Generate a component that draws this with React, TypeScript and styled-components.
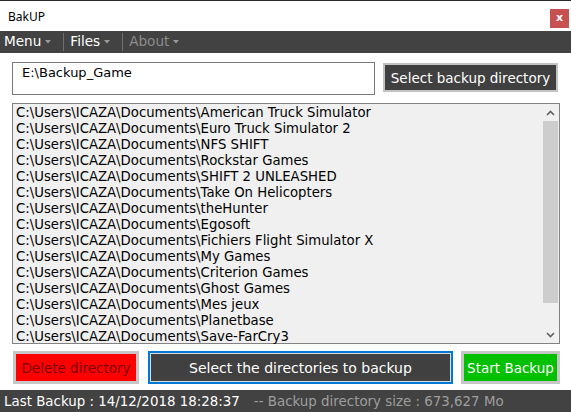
import { FC } from 'react';
import styled, { createGlobalStyle } from 'styled-components';

const directories = [
	'American Truck Simulator',
	'Euro Truck Simulator 2',
	'NFS SHIFT',
	'Rockstar Games',
	'SHIFT 2 UNLEASHED',
	'Take On Helicopters',
	'theHunter',
	'Egosoft',
	'Fichiers Flight Simulator X',
	'My Games',
	'Criterion Games',
	'Ghost Games',
	'Mes jeux',
	'Planetbase',
	'Save-FarCry3',
];

const GlobalStyle = createGlobalStyle`
	html, body {
		margin: 0;
		padding: 0;
		background: #ffffff;
	}
	* {
		box-sizing: border-box;
	}
`;

const Caret: FC = () => (
	<svg width="6" height="4" viewBox="0 0 6 4">
		<path d="M0 0h6L3 3.5z" fill="#9a9a9a" />
	</svg>
);

const App: FC = () => (
	<Window>
		<GlobalStyle />
		<TitleBar>
			<Title>BakUP</Title>
			<CloseButton>x</CloseButton>
		</TitleBar>
		<MenuBar>
			<MenuItem>
				Menu <Caret />
			</MenuItem>
			<MenuItem $separated>
				Files <Caret />
			</MenuItem>
			<MenuItem $separated $disabled>
				About <Caret />
			</MenuItem>
		</MenuBar>
		<Content>
			<TopRow>
				<PathBox>E:\Backup_Game</PathBox>
				<DarkButton>Select backup directory</DarkButton>
			</TopRow>
			<ListBox>
				<Items>
					{directories.map((d) => (
						<Item key={d}>C:\Users\ICAZA\Documents\{d}</Item>
					))}
				</Items>
				<ScrollBar>
					<Arrow>
						<svg width="9" height="6" viewBox="0 0 9 6">
							<path d="M1 5L4.5 1.5L8 5" stroke="#606060" strokeWidth="1.6" fill="none" />
						</svg>
					</Arrow>
					<Track>
						<Thumb />
					</Track>
					<Arrow>
						<svg width="9" height="6" viewBox="0 0 9 6">
							<path d="M1 1L4.5 4.5L8 1" stroke="#606060" strokeWidth="1.6" fill="none" />
						</svg>
					</Arrow>
				</ScrollBar>
			</ListBox>
			<BottomRow>
				<ColorButton $bg="#ff0000" $fg="#7a0000" $width={126}>
					Delete directory
				</ColorButton>
				<MainButton>Select the directories to backup</MainButton>
				<ColorButton $bg="#00c000" $fg="#ffffff" $width={99}>
					Start Backup
				</ColorButton>
			</BottomRow>
		</Content>
		<StatusBar>
			<span>Last Backup : 14/12/2018 18:28:37</span>
			<StatusInfo>-- Backup directory size : 673,627 Mo</StatusInfo>
		</StatusBar>
	</Window>
);

const Window = styled.div`
	width: 571px;
	height: 412px;
	display: flex;
	flex-direction: column;
	background: #ffffff;
	font-family: 'DejaVu Sans', Verdana, sans-serif;
	overflow: hidden;
`;

const TitleBar = styled.div`
	height: 31px;
	flex-shrink: 0;
	display: flex;
	align-items: center;
	justify-content: space-between;
	padding: 0 2px 0 8px;
	border-top: 1px solid #2a2a2a;
`;

const Title = styled.span`
	font-family: 'Noto Sans', 'Open Sans', sans-serif;
	font-size: 12px;
	color: #000000;
`;

const CloseButton = styled.div`
	width: 19px;
	height: 19px;
	margin-top: 4px;
	background: #c75050;
	color: #ffffff;
	font-size: 11px;
	font-weight: bold;
	display: flex;
	align-items: center;
	justify-content: center;
	line-height: 1;
	padding-bottom: 2px;
`;

const MenuBar = styled.div`
	height: 22px;
	flex-shrink: 0;
	background: #424242;
	display: flex;
	align-items: stretch;
`;

const MenuItem = styled.div<{ $separated?: boolean; $disabled?: boolean }>`
	display: flex;
	align-items: center;
	gap: 4px;
	padding: 0 12px 0 ${({ $separated }) => ($separated ? '6px' : '4px')};
	font-size: 13.6px;
	color: ${({ $disabled }) => ($disabled ? '#8c8c8c' : '#ffffff')};
	border-left: ${({ $separated }) => ($separated ? '1px solid #6e6e6e' : 'none')};
	margin: 2px 0;
	line-height: 1;
`;

const Content = styled.div`
	flex: 1;
	display: flex;
	flex-direction: column;
	padding: 9px 11px 0 12px;
`;

const TopRow = styled.div`
	display: flex;
	align-items: flex-start;
	gap: 8px;
`;

const PathBox = styled.div`
	width: 363px;
	height: 33px;
	border: 1px solid #7a7a7a;
	padding: 2px 9px;
	font-size: 13px;
	color: #000000;
`;

const DarkButton = styled.div`
	width: 175px;
	height: 29px;
	margin-top: 1px;
	background: #404040;
	border: 2px solid #c3c3c3;
	color: #ffffff;
	font-size: 13.5px;
	display: flex;
	align-items: center;
	justify-content: center;
`;

const ListBox = styled.div`
	margin-top: 8px;
	width: 548px;
	height: 241px;
	border: 1px solid #828282;
	background: #f0f0f0;
	display: flex;
`;

const Items = styled.div`
	flex: 1;
	padding: 1px 0 0 3px;
`;

const Item = styled.div`
	height: 16px;
	line-height: 16px;
	font-size: 13.25px;
	color: #000000;
	white-space: nowrap;
`;

const ScrollBar = styled.div`
	width: 17px;
	display: flex;
	flex-direction: column;
	background: #f0f0f0;
`;

const Arrow = styled.div`
	height: 17px;
	display: flex;
	align-items: center;
	justify-content: center;
`;

const Track = styled.div`
	flex: 1;
	display: flex;
	flex-direction: column;
	padding: 0 1px;
`;

const Thumb = styled.div`
	height: 182px;
	background: #cdcdcd;
`;

const BottomRow = styled.div`
	margin-top: 7px;
	display: flex;
	align-items: center;
	height: 33px;
	padding-left: 1px;
	gap: 9px;
`;

const ColorButton = styled.div<{ $bg: string; $fg: string; $width: number }>`
	width: ${({ $width }) => $width}px;
	height: 33px;
	border: 3px solid #c6c6c6;
	background: ${({ $bg }) => $bg};
	color: ${({ $fg }) => $fg};
	font-size: 13.5px;
	display: flex;
	align-items: center;
	justify-content: center;
	white-space: nowrap;
`;

const MainButton = styled.div`
	width: 305px;
	height: 33px;
	border: 2px solid #0078d7;
	box-shadow: inset 0 0 0 1px #dcdcdc;
	background: #404040;
	color: #ffffff;
	font-size: 14px;
	display: flex;
	align-items: center;
	justify-content: center;
	margin-right: -1px;
`;

const StatusBar = styled.div`
	height: 22px;
	flex-shrink: 0;
	background: #424242;
	display: flex;
	align-items: center;
	gap: 14px;
	padding-left: 4px;
	font-size: 13.4px;
	color: #ffffff;
	white-space: nowrap;
`;

const StatusInfo = styled.span`
	color: #9e9e9e;
`;

export default App;
